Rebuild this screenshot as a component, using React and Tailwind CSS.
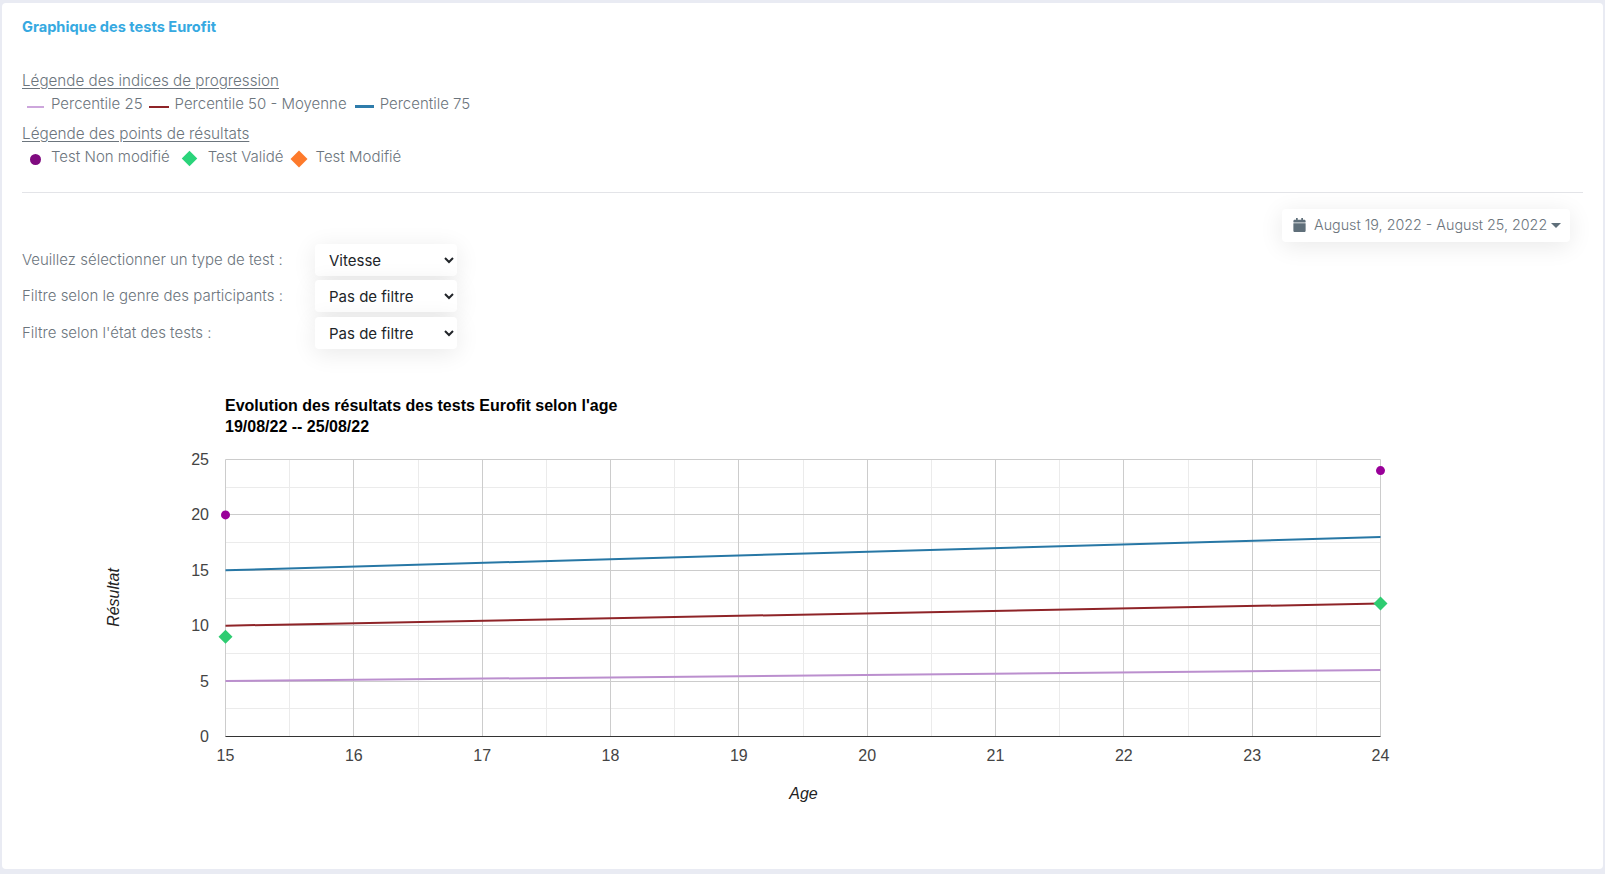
import React from "react";
import { FaCalendar } from "react-icons/fa";

const X0 = 225.5, X1 = 1380.5, Y0 = 736.5, Y1 = 459.5;
const px = (age) => X0 + ((age - 15) / 9) * (X1 - X0);
const py = (v) => Y0 - (v / 25) * (Y0 - Y1);
const ages = [15, 16, 17, 18, 19, 20, 21, 22, 23, 24];
const vals = [0, 5, 10, 15, 20, 25];

function Chart() {
  return (
    <svg className="block w-[1561px] h-[450px]" width="1561" height="450">
      <g transform="translate(-22,-380)" fontFamily="'Liberation Sans', Arial, sans-serif">
        <text x="225" y="411" fontSize="16" fontWeight="700" fill="#000">Evolution des résultats des tests Eurofit selon l'age</text>
        <text x="225" y="432" fontSize="16" fontWeight="700" fill="#000">19/08/22 -- 25/08/22</text>
        {ages.slice(0, 9).map((a) => (
          <line key={"m" + a} x1={Math.floor(px(a + 0.5)) + 0.5} x2={Math.floor(px(a + 0.5)) + 0.5} y1={Y1} y2={Y0} stroke="#ebebeb" />
        ))}
        {vals.slice(0, 5).map((v) => (
          <line key={"h" + v} x1={X0} x2={X1} y1={Math.floor(py(v + 2.5)) + 0.5} y2={Math.floor(py(v + 2.5)) + 0.5} stroke="#ebebeb" />
        ))}
        {ages.map((a) => (
          <line key={"v" + a} x1={Math.floor(px(a)) + 0.5} x2={Math.floor(px(a)) + 0.5} y1={Y1} y2={Y0} stroke="#cccccc" />
        ))}
        {vals.slice(1).map((v) => (
          <line key={"g" + v} x1={X0} x2={X1} y1={Math.floor(py(v)) + 0.5} y2={Math.floor(py(v)) + 0.5} stroke="#cccccc" />
        ))}
        <line x1={X0} x2={X1} y1={Y0} y2={Y0} stroke="#333333" />
        {vals.map((v) => (
          <text key={"y" + v} x="209" y={py(v) + 5.5} fontSize="16" textAnchor="end" fill="#444444">{v}</text>
        ))}
        {ages.map((a) => (
          <text key={"x" + a} x={px(a)} y="761" fontSize="16" textAnchor="middle" fill="#444444">{a}</text>
        ))}
        <line x1={X0} x2={X1} y1={py(15)} y2={py(18)} stroke="#2777a5" strokeWidth="2" />
        <line x1={X0} x2={X1} y1={py(10)} y2={py(12)} stroke="#8f2428" strokeWidth="2" />
        <line x1={X0} x2={X1} y1={py(5)} y2={py(6)} stroke="#bb8fce" strokeWidth="2" />
        <circle cx={X0} cy={py(20)} r="4.5" fill="#990099" />
        <circle cx={X1} cy={py(24)} r="4.5" fill="#990099" />
        <path d={`M${X0} ${py(9) - 7}l7 7l-7 7l-7 -7z`} fill="#2ecc71" />
        <path d={`M${X1} ${py(12) - 7}l7 7l-7 7l-7 -7z`} fill="#2ecc71" />
        <text x="803.5" y="799" fontSize="16" fontStyle="italic" textAnchor="middle" fill="#222222">Age</text>
        <text transform="translate(119,597.5) rotate(-90)" fontSize="16" fontStyle="italic" textAnchor="middle" fill="#222222">Résultat</text>
      </g>
    </svg>
  );
}

function FilterRow({ label, value, options, className = "" }) {
  return (
    <div className={"flex items-center h-8 " + className}>
      <label className="w-[293px] text-[15px] font-light text-[#6c757d]">{label}</label>
      <select
        defaultValue={value}
        className="w-[142px] h-8 pl-[10px] pr-[5px] bg-white rounded text-[15px] font-normal text-[#212529] shadow-[0_4px_24px_rgba(0,0,0,0.09)]"
      >
        {options.map((o) => <option key={o}>{o}</option>)}
      </select>
    </div>
  );
}

export default function App() {
  return (
    <div className="h-[874px] overflow-hidden bg-[#e9ebf3] pt-[3px] px-[2px] font-['Inter',sans-serif]">
      <div className="h-[866px] bg-white rounded px-5 pt-[15px]">
        <h2 className="text-[14.6px] leading-[18px] font-bold text-[#36a9e1]">Graphique des tests Eurofit</h2>
        <div className="mt-[35px] text-[15px] font-light text-[#6c757d]">
          <div className="leading-[20px] text-[15.2px] underline underline-offset-2">Légende des indices de progression</div>
          <div className="flex items-center h-[24px] mt-[1px]">
            <span className="inline-block w-[17px] h-[2px] ml-[5px] mt-[5px] bg-[#cda6dc]" />
            <span className="ml-[7px]">Percentile 25</span>
            <span className="inline-block w-[20px] h-[2px] ml-[6px] mt-[5px] bg-[#8f2428]" />
            <span className="ml-[6px]">Percentile 50 - Moyenne</span>
            <span className="inline-block w-[19px] h-[3px] ml-[8px] mt-[5px] bg-[#2f7cab]" />
            <span className="ml-[6px]">Percentile 75</span>
          </div>
          <div className="leading-[20px] mt-[8px] text-[15.3px] underline underline-offset-2">Légende des points de résultats</div>
          <div className="flex items-center h-[24px] mt-[1px]">
            <span className="inline-block w-[11px] h-[11px] ml-[8px] mt-[5px] rounded-full bg-[#7f0a7f]" />
            <span className="ml-[10px]">Test Non modifié</span>
            <span className="inline-block w-[11px] h-[11px] ml-[14px] mt-[3px] rotate-45 bg-[#2ad47a]" />
            <span className="ml-[13px]">Test Validé</span>
            <span className="inline-block w-[12px] h-[12px] ml-[9px] mt-[3px] rotate-45 bg-[#fd7a2b]" />
            <span className="ml-[11px]">Test Modifié</span>
          </div>
        </div>
        <hr className="mt-[23px] border-0 border-t border-[#e3e4e8]" />
        <div className="flex justify-end mt-4 mr-[13px]">
          <div className="flex items-center w-[288px] h-[33px] pl-[11px] pb-[1px] bg-white rounded text-[14.3px] font-light text-[#6c757d] shadow-[0_4px_24px_rgba(0,0,0,0.09)]">
            <FaCalendar className="w-[13px] h-[14px] text-[#5f6f7a]" />
            <span className="ml-[8px]">August 19, 2022 - August 25, 2022</span>
            <span className="ml-1 w-0 h-0 border-x-[5px] border-t-[5px] border-x-transparent border-t-[#5f6f7a]" />
          </div>
        </div>
        <div className="mt-[2px]">
          <FilterRow label="Veuillez sélectionner un type de test :" value="Vitesse" options={["Vitesse", "Force", "Endurance"]} />
          <FilterRow className="mt-1" label="Filtre selon le genre des participants :" value="Pas de filtre" options={["Pas de filtre", "Homme", "Femme"]} />
          <FilterRow className="mt-[5px]" label="Filtre selon l'état des tests :" value="Pas de filtre" options={["Pas de filtre", "Validé", "Modifié"]} />
        </div>
        <div className="mt-[31px]">
          <Chart />
        </div>
      </div>
    </div>
  );
}
